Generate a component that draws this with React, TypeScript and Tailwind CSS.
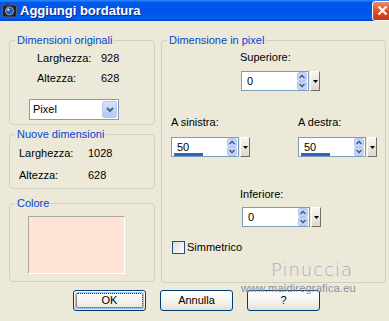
import React from "react";

function SpinArrows() {
  return (
    <svg width="10" height="18" viewBox="0 0 10 18" className="mr-[1px] shrink-0">
      <rect x="0.5" y="0.5" width="9" height="8" rx="1.5" fill="#c5d5fc" stroke="#b3c5f3" />
      <rect x="0.5" y="9.5" width="9" height="8" rx="1.5" fill="#c5d5fc" stroke="#b3c5f3" />
      <path d="M2.5 6 L5 3.5 L7.5 6" fill="none" stroke="#4d6185" strokeWidth="1.6" />
      <path d="M2.5 12 L5 14.5 L7.5 12" fill="none" stroke="#4d6185" strokeWidth="1.6" />
    </svg>
  );
}

function DropButton() {
  return (
    <div className="flex h-[20px] w-[10px] items-center justify-center border border-t-white border-l-white border-r-[#716f64] border-b-[#716f64] bg-[linear-gradient(to_bottom,#f7f6f1,#dcd8cc)]">
      <svg width="5" height="3" viewBox="0 0 5 3">
        <path d="M0 0 H5 L2.5 3 Z" fill="#000" />
      </svg>
    </div>
  );
}

function Spin({ value, bar }: { value: string; bar?: boolean }) {
  return (
    <div className="flex gap-[1px]">
      <div className="relative flex h-[20px] w-[68px] items-center border border-[#7f9db9] bg-white pl-[5px]">
        <span className="flex-1">{value}</span>
        <SpinArrows />
        {bar && <div className="absolute bottom-[0px] left-[2px] h-[3px] w-[29px] bg-[#3264c0]" />}
      </div>
      <DropButton />
    </div>
  );
}

function Group({
  title,
  className,
  children,
}: {
  title: string;
  className: string;
  children: React.ReactNode;
}) {
  return (
    <fieldset className={`rounded-[4px] border border-[#d0d0bf] ${className}`}>
      <legend className="ml-[5px] px-[2px] text-[11px] leading-[13px] text-[#0046d5]">{title}</legend>
      {children}
    </fieldset>
  );
}

function XpButton({ label, isDefault }: { label: string; isDefault?: boolean }) {
  return (
    <button className="flex h-[21px] w-[73px] items-center justify-center rounded-[3px] border border-[#003c74] bg-[linear-gradient(to_bottom,#ffffff,#f3f2ec_60%,#e3e0d4)] p-[2px] text-[11px] leading-[13px] text-black">
      {isDefault ? (
        <span className="flex h-full w-full items-center justify-center rounded-[2px] border border-dotted border-[#222] shadow-[0_0_0_1px_#9fbdf0]">
          {label}
        </span>
      ) : (
        label
      )}
    </button>
  );
}

export default function App() {
  return (
    <div className="h-[321px] w-[389px] overflow-hidden bg-[#ece9d8] font-['Liberation_Sans',Arial,sans-serif] text-[11px] leading-[13px] text-black">
      {/* title bar */}
      <div className="flex h-[21px] items-center bg-[linear-gradient(to_bottom,#2e8cff_0%,#0058ee_12%,#0054e8_55%,#005cf4_85%,#0045cc_100%)] pl-[2px]">
        <svg width="15" height="15" viewBox="0 0 15 15" className="mr-[3px]">
          <rect x="0.5" y="2" width="14" height="12" rx="2" fill="#1e2230" stroke="#5a6070" />
          <rect x="3" y="0.5" width="5" height="3" rx="1" fill="#3a4050" />
          <circle cx="7.5" cy="8" r="4" fill="#2d5aa8" stroke="#8aa0c8" />
          <circle cx="6.3" cy="6.8" r="1.2" fill="#cfe0ff" />
        </svg>
        <span className="flex-1 text-[13px] font-bold leading-[16px] text-white [text-shadow:1px_1px_0_#0a2a8a]">
          Aggiungi bordatura
        </span>
        <div className="mr-[-4px] flex h-[20px] w-[21px] items-center justify-center rounded-[3px] border border-white bg-[linear-gradient(to_bottom,#ec8a6c,#d9502a_50%,#c23c14)]">
          <svg width="11" height="11" viewBox="0 0 11 11">
            <path d="M1.5 1.5 L9.5 9.5 M9.5 1.5 L1.5 9.5" stroke="#fff" strokeWidth="2.2" />
          </svg>
        </div>
      </div>

      <div className="flex gap-[6px] pl-[9px] pt-[13px]">
        {/* left column */}
        <div className="flex w-[146px] flex-col">
          <Group title="Dimensioni originali" className="h-[91px]">
            <div className="grid grid-cols-[64px_auto] gap-y-[7px] pl-[27px] pt-[5px]">
              <span>Larghezza:</span>
              <span>928</span>
              <span>Altezza:</span>
              <span>628</span>
            </div>
            <div className="ml-[19px] mt-[14px] flex h-[21px] w-[90px] items-center border border-[#7f9db9] bg-white pl-[3px] pr-[1px]">
              <span className="flex-1">Pixel</span>
              <div className="flex h-[17px] w-[15px] items-center justify-center rounded-[2px] border border-[#b9c9ef] bg-[linear-gradient(to_bottom,#d6e1fd,#b6c8f7)]">
                <svg width="8" height="6" viewBox="0 0 8 6">
                  <path d="M1 1 L4 4 L7 1" fill="none" stroke="#4d6185" strokeWidth="2" />
                </svg>
              </div>
            </div>
          </Group>

          <Group title="Nuove dimensioni" className="mt-[3px] h-[61px]">
            <div className="grid grid-cols-[69px_auto] gap-y-[9px] pl-[9px] pt-[6px]">
              <span>Larghezza:</span>
              <span>1028</span>
              <span>Altezza:</span>
              <span>628</span>
            </div>
          </Group>

          <Group title="Colore" className="mt-[8px] h-[85px]">
            <div className="ml-[18px] mt-[6px] h-[58px] w-[97px] border border-t-[#aca899] border-l-[#aca899] border-r-white border-b-white bg-[#fee3d6]" />
          </Group>
        </div>

        {/* right group */}
        <Group title="Dimensione in pixel" className="relative h-[249px] w-[225px]">
          <div className="flex flex-col">
            <span className="ml-[78px] mt-[4px]">Superiore:</span>
            <div className="ml-[79px] mt-[7px]">
              <Spin value="0" />
            </div>

            <div className="mt-[25px] flex">
              <div className="ml-[9px] flex w-[127px] flex-col">
                <span>A sinistra:</span>
                <div className="mt-[8px]">
                  <Spin value="50" bar />
                </div>
              </div>
              <div className="flex flex-col">
                <span>A destra:</span>
                <div className="mt-[8px]">
                  <Spin value="50" bar />
                </div>
              </div>
            </div>

            <span className="ml-[78px] mt-[31px]">Inferiore:</span>
            <div className="ml-[80px] mt-[6px]">
              <Spin value="0" />
            </div>

            <label className="ml-[10px] mt-[14px] flex items-center gap-[2px]">
              <span className="h-[13px] w-[13px] border border-[#1c5180] bg-[linear-gradient(135deg,#dcdcd7,#ffffff)]" />
              <span>Simmetrico</span>
            </label>
          </div>

          {/* watermark */}
          <span className="absolute left-[109px] top-[214px] text-[18px] leading-[18px] tracking-[1px] text-[#a9a9c0] font-['DejaVu_Sans',sans-serif] font-light">
            Pinuccia
          </span>
          <span className="absolute left-[79px] top-[235px] text-[11px] leading-[12px] tracking-[0.2px] text-[#8c8c9c]">
            www.maidiregrafica.eu
          </span>
        </Group>
      </div>

      <div className="flex gap-[14px] pl-[73px] pt-[7px]">
        <XpButton label="OK" isDefault />
        <XpButton label="Annulla" />
        <XpButton label="?" />
      </div>
    </div>
  );
}
